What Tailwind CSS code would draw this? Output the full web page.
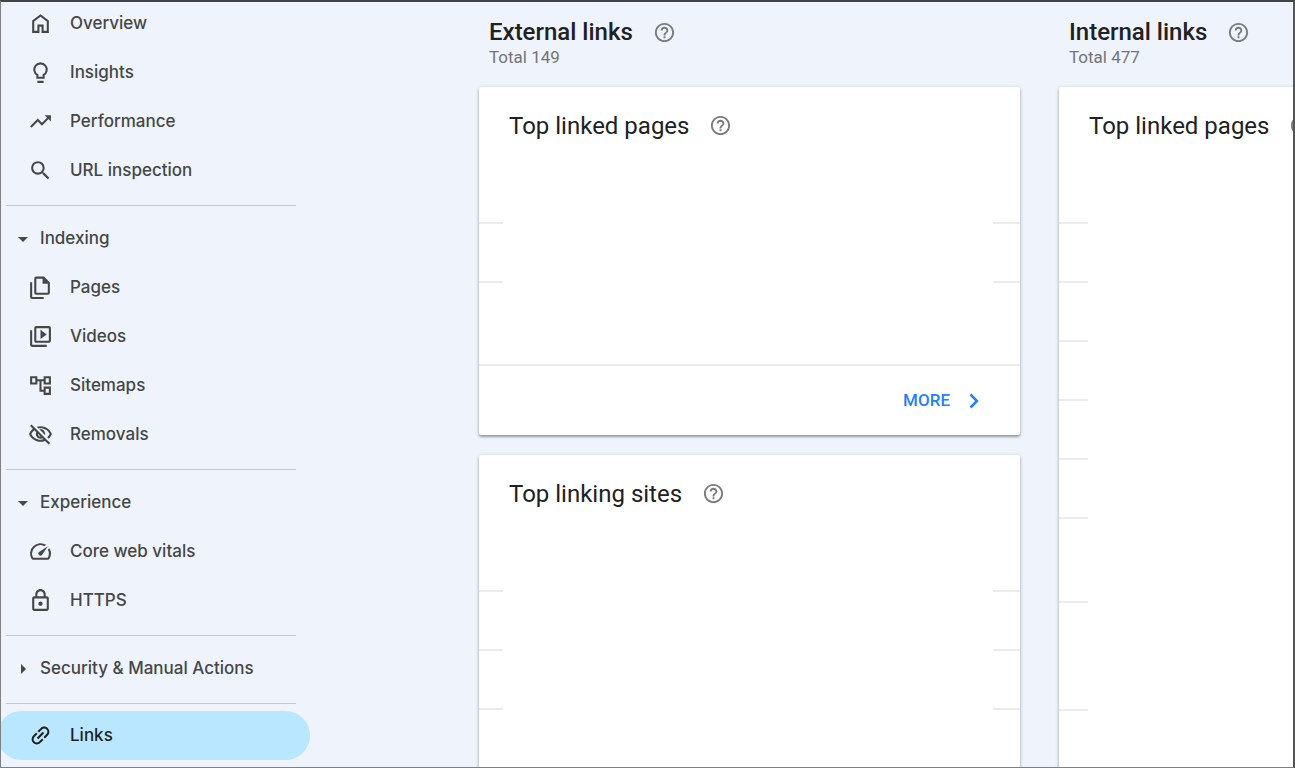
<!DOCTYPE html>
<html lang="en">
<head>
  <meta charset="UTF-8">
  <meta name="viewport" content="width=device-width,initial-scale=1">
  <title>Search Console – Links</title>
  <script src="https://cdn.jsdelivr.net/npm/@tailwindcss/browser@4"></script>
</head>
<body class="h-screen overflow-hidden flex border-t-2 border-r-2 border-b border-l border-t-[#444444] border-r-[#555555] border-b-[#808080] border-l-[#808080] bg-[#eef3fc] font-[Roboto,sans-serif]">

  <!-- shared icons -->
  <svg class="hidden">
    <symbol id="help" viewBox="0 0 24 24"><path d="M11 18h2v-2h-2v2zm1-16C6.48 2 2 6.48 2 12s4.48 10 10 10 10-4.48 10-10S17.52 2 12 2zm0 18c-4.41 0-8-3.59-8-8s3.59-8 8-8 8 3.59 8 8-3.59 8-8 8zm0-14c-2.21 0-4 1.79-4 4h2c0-1.1.9-2 2-2s2 .9 2 2c0 2-3 1.75-3 5h2c0-2.25 3-2.5 3-5 0-2.21-1.79-4-4-4z"/></symbol>
    <symbol id="down" viewBox="0 0 24 24"><path d="M7 10l5 5 5-5z"/></symbol>
    <symbol id="right" viewBox="0 0 24 24"><path d="M10 17l5-5-5-5z"/></symbol>
  </svg>

  <!-- SIDEBAR -->
  <nav class="w-[309px] shrink-0 -mt-[3px] text-[17px] font-medium font-[Inter,sans-serif] text-[#444746] fill-[#444746]">
    <a href="#" class="flex items-center h-[49px] pl-[27px] gap-[17px]">
      <svg class="size-[25px]" viewBox="0 0 24 24"><path d="M6 19h3v-6h6v6h3v-9l-6-4.5L6 10v9zm-2 2V9l8-6 8 6v12h-7v-6h-2v6H4z"/></svg>Overview
    </a>
    <a href="#" class="flex items-center h-[49px] pl-[27px] gap-[17px]">
      <svg class="size-[25px] fill-none stroke-[#444746] stroke-2" viewBox="0 0 24 24"><path d="M9 17v-2.6a6 6 0 1 1 6 0V17zM9 21h6"/></svg>Insights
    </a>
    <a href="#" class="flex items-center h-[49px] pl-[27px] gap-[17px]">
      <svg class="size-[25px]" viewBox="0 0 24 24"><path d="M16 6l2.29 2.29-4.88 4.88-4-4L2 16.59 3.41 18l6-6 4 4 6.3-6.29L22 12V6z"/></svg>Performance
    </a>
    <a href="#" class="flex items-center h-[49px] pl-[27px] gap-[17px]">
      <svg class="size-[25px]" viewBox="0 0 24 24"><path d="M15.5 14h-.79l-.28-.27A6.47 6.47 0 0 0 16 9.5 6.5 6.5 0 1 0 9.5 16c1.61 0 3.09-.59 4.23-1.57l.27.28v.79l5 4.99L20.49 19l-4.99-5zm-6 0C7.01 14 5 11.99 5 9.5S7.01 5 9.5 5 14 7.01 14 9.5 11.99 14 9.5 14z"/></svg>URL inspection
    </a>

    <hr class="mt-[10px] mb-2 ml-[5px] mr-[14px] border-[#c7c7c7]">

    <button class="flex items-center w-full h-[49px] pl-[10px] gap-[5px]">
      <svg class="size-6"><use href="#down"/></svg>Indexing
    </button>
    <a href="#" class="flex items-center h-[49px] pl-[27px] gap-[17px]">
      <svg class="size-[25px]" viewBox="0 0 24 24"><path class="fill-none stroke-[#444746] stroke-2" d="M8 2.5h7l5 5V17a1 1 0 0 1-1 1H8a1 1 0 0 1-1-1V3.5a1 1 0 0 1 1-1zM3 7v14a1 1 0 0 0 1 1h11"/><path d="M14 2v6.5h6z"/></svg>Pages
    </a>
    <a href="#" class="flex items-center h-[49px] pl-[27px] gap-[17px]">
      <svg class="size-[25px]" viewBox="0 0 24 24"><path d="M4 6H2v14c0 1.1.9 2 2 2h14v-2H4V6zm16-4H8c-1.1 0-2 .9-2 2v12c0 1.1.9 2 2 2h12c1.1 0 2-.9 2-2V4c0-1.1-.9-2-2-2zm0 14H8V4h12v12zM12 5.5v9l6-4.5z"/></svg>Videos
    </a>
    <a href="#" class="flex items-center h-[49px] pl-[27px] gap-[17px]">
      <svg class="size-[25px]" viewBox="0 0 24 24"><path d="M22 11V3h-7v3H9V3H2v8h7V8h2v10h4v3h7v-8h-7v3h-2V8h2v3h7zM7 9H4V5h3v4zm10 6h3v4h-3v-4zm0-10h3v4h-3V5z"/></svg>Sitemaps
    </a>
    <a href="#" class="flex items-center h-[49px] pl-[27px] gap-[17px]">
      <svg class="size-[25px]" viewBox="0 0 24 24"><path d="M12 6c3.79 0 7.17 2.13 8.82 5.5-.59 1.22-1.42 2.27-2.41 3.12l1.41 1.41c1.39-1.23 2.49-2.77 3.18-4.53C21.27 7.11 17 4 12 4c-1.27 0-2.49.2-3.64.57l1.65 1.65C10.66 6.09 11.32 6 12 6zm-1.07 1.14L13 9.21c.57.25 1.03.71 1.28 1.28l2.07 2.07c.08-.34.14-.7.14-1.07C16.5 9.01 14.48 7 12 7c-.37 0-.72.05-1.07.14zM2.01 3.87l2.68 2.68C3.06 7.83 1.77 9.53 1 11.5 2.73 15.89 7 19 12 19c1.52 0 2.98-.29 4.32-.82l3.42 3.42 1.41-1.41L3.42 2.45 2.01 3.87zm7.5 7.5l2.61 2.61c-.04.01-.08.02-.12.02-1.38 0-2.5-1.12-2.5-2.5 0-.05.01-.08.01-.13zm-3.4-3.4l1.75 1.75c-.23.55-.36 1.15-.36 1.78 0 2.48 2.02 4.5 4.5 4.5.63 0 1.23-.13 1.77-.36l.98.98c-.88.24-1.8.38-2.75.38-3.79 0-7.17-2.13-8.82-5.5.7-1.43 1.72-2.61 2.93-3.53z"/></svg>Removals
    </a>

    <hr class="mt-[10px] mb-2 ml-[5px] mr-[14px] border-[#c7c7c7]">

    <button class="flex items-center w-full h-[49px] pl-[10px] gap-[5px]">
      <svg class="size-6"><use href="#down"/></svg>Experience
    </button>
    <a href="#" class="flex items-center h-[49px] pl-[27px] gap-[17px]">
      <svg class="size-[25px]" viewBox="0 0 24 24"><path d="M20.38 8.57l-1.23 1.85a8 8 0 0 1-.22 7.58H5.07A8 8 0 0 1 15.58 6.85l1.85-1.23A10 10 0 0 0 3.35 19a2 2 0 0 0 1.72 1h13.85a2 2 0 0 0 1.74-1 10 10 0 0 0-.27-10.44zm-9.79 6.84a2 2 0 0 0 2.83 0l5.66-8.49-8.49 5.66a2 2 0 0 0 0 2.83z"/></svg>Core web vitals
    </a>
    <a href="#" class="flex items-center h-[49px] pl-[27px] gap-[17px]">
      <svg class="size-[25px]" viewBox="0 0 24 24"><path d="M18 8h-1V6c0-2.76-2.24-5-5-5S7 3.24 7 6v2H6c-1.1 0-2 .9-2 2v10c0 1.1.9 2 2 2h12c1.1 0 2-.9 2-2V10c0-1.1-.9-2-2-2zM9 6c0-1.66 1.34-3 3-3s3 1.34 3 3v2H9V6zm9 14H6V10h12v10zm-6-3c1.1 0 2-.9 2-2s-.9-2-2-2-2 .9-2 2 .9 2 2 2z"/></svg>HTTPS
    </a>

    <hr class="mt-[10px] mb-2 ml-[5px] mr-[14px] border-[#c7c7c7]">

    <button class="flex items-center w-full h-[49px] pl-[10px] gap-[5px]">
      <svg class="size-6"><use href="#right"/></svg>Security &amp; Manual Actions
    </button>

    <hr class="mt-[10px] mb-[7px] ml-[5px] mr-[14px] border-[#c7c7c7]">

    <a href="#" aria-current="page" class="flex items-center h-[49px] -ml-1 pl-[31px] gap-[17px] rounded-full bg-[#b8e7ff] text-[#1f1f1f] fill-[#1f1f1f]">
      <svg class="size-[25px] -rotate-45" viewBox="0 0 24 24"><path d="M3.9 12c0-1.71 1.39-3.1 3.1-3.1h4V7H7c-2.76 0-5 2.24-5 5s2.24 5 5 5h4v-1.9H7c-1.71 0-3.1-1.39-3.1-3.1zM8 13h8v-2H8v2zm9-6h-4v1.9h4c1.71 0 3.1 1.39 3.1 3.1s-1.39 3.1-3.1 3.1h-4V17h4c2.76 0 5-2.24 5-5s-2.24-5-5-5z"/></svg>Links
    </a>
  </nav>

  <!-- MAIN -->
  <main class="flex-1 min-w-0 overflow-hidden flex gap-[39px] pl-[169px] text-[#212121] fill-[#7b7b7b]">

    <section class="w-[541px] shrink-0">
      <header class="h-[85px] pt-[15px] pl-[10px]">
        <h2 class="flex items-center gap-5 h-[30px] text-2xl font-medium">External links <svg class="size-[23px]"><use href="#help"/></svg></h2>
        <p class="text-[17px] leading-5 text-[#757575]">Total 149</p>
      </header>

      <div class="mb-5 bg-white rounded-xs shadow-[0_1px_4px_rgba(0,0,0,0.2),0_2px_2px_rgba(0,0,0,0.25)]">
        <h3 class="flex items-center gap-5 h-[135px] pt-[23px] pb-[81px] pl-[30px] text-2xl">Top linked pages <svg class="size-[23px]"><use href="#help"/></svg></h3>
        <div class="flex justify-between h-[59px]"><i class="w-6 h-[2px] bg-[#ebebeb]"></i><i class="w-[27px] h-[2px] bg-[#ebebeb]"></i></div>
        <div class="flex justify-between h-[83px]"><i class="w-6 h-[2px] bg-[#ebebeb]"></i><i class="w-[27px] h-[2px] bg-[#ebebeb]"></i></div>
        <footer class="flex items-center justify-end h-[71px] pr-[34px] border-t-2 border-[#ebebeb]">
          <button class="flex items-center gap-3 text-[17px] font-medium text-[#2680fb]">MORE
            <svg class="size-6 fill-none stroke-[#2680fb] stroke-[2.5]" viewBox="0 0 24 24"><path d="M8.5 5.5L15 12l-6.5 6.5"/></svg>
          </button>
        </footer>
      </div>

      <div class="h-[400px] bg-white rounded-xs shadow-[0_1px_4px_rgba(0,0,0,0.2),0_2px_2px_rgba(0,0,0,0.25)]">
        <h3 class="flex items-center gap-5 h-[135px] pt-[23px] pb-[81px] pl-[30px] text-2xl">Top linking sites <svg class="size-[23px]"><use href="#help"/></svg></h3>
        <div class="flex justify-between h-[59px]"><i class="w-6 h-[2px] bg-[#ebebeb]"></i><i class="w-[27px] h-[2px] bg-[#ebebeb]"></i></div>
        <div class="flex justify-between h-[59px]"><i class="w-6 h-[2px] bg-[#ebebeb]"></i><i class="w-[27px] h-[2px] bg-[#ebebeb]"></i></div>
        <div class="flex justify-between h-[59px]"><i class="w-6 h-[2px] bg-[#ebebeb]"></i><i class="w-[27px] h-[2px] bg-[#ebebeb]"></i></div>
      </div>
    </section>

    <section class="w-[541px] shrink-0">
      <header class="h-[85px] pt-[15px] pl-[10px]">
        <h2 class="flex items-center gap-5 h-[30px] text-2xl font-medium">Internal links <svg class="size-[23px]"><use href="#help"/></svg></h2>
        <p class="text-[17px] leading-5 text-[#757575]">Total 477</p>
      </header>

      <div class="h-[760px] bg-white rounded-xs shadow-[0_1px_4px_rgba(0,0,0,0.2),0_2px_2px_rgba(0,0,0,0.25)]">
        <h3 class="flex items-center gap-5 h-[135px] pt-[23px] pb-[81px] pl-[30px] text-2xl">Top linked pages <svg class="size-[23px]"><use href="#help"/></svg></h3>
        <div class="h-[59px]"><i class="block w-[29px] h-[2px] bg-[#ebebeb]"></i></div>
        <div class="h-[59px]"><i class="block w-[29px] h-[2px] bg-[#ebebeb]"></i></div>
        <div class="h-[59px]"><i class="block w-[29px] h-[2px] bg-[#ebebeb]"></i></div>
        <div class="h-[59px]"><i class="block w-[29px] h-[2px] bg-[#ebebeb]"></i></div>
        <div class="h-[59px]"><i class="block w-[29px] h-[2px] bg-[#ebebeb]"></i></div>
        <div class="h-[84px]"><i class="block w-[29px] h-[2px] bg-[#ebebeb]"></i></div>
        <div class="h-[108px]"><i class="block w-[29px] h-[2px] bg-[#ebebeb]"></i></div>
        <div class="h-[59px]"><i class="block w-[29px] h-[2px] bg-[#ebebeb]"></i></div>
      </div>
    </section>
  </main>
</body>
</html>
